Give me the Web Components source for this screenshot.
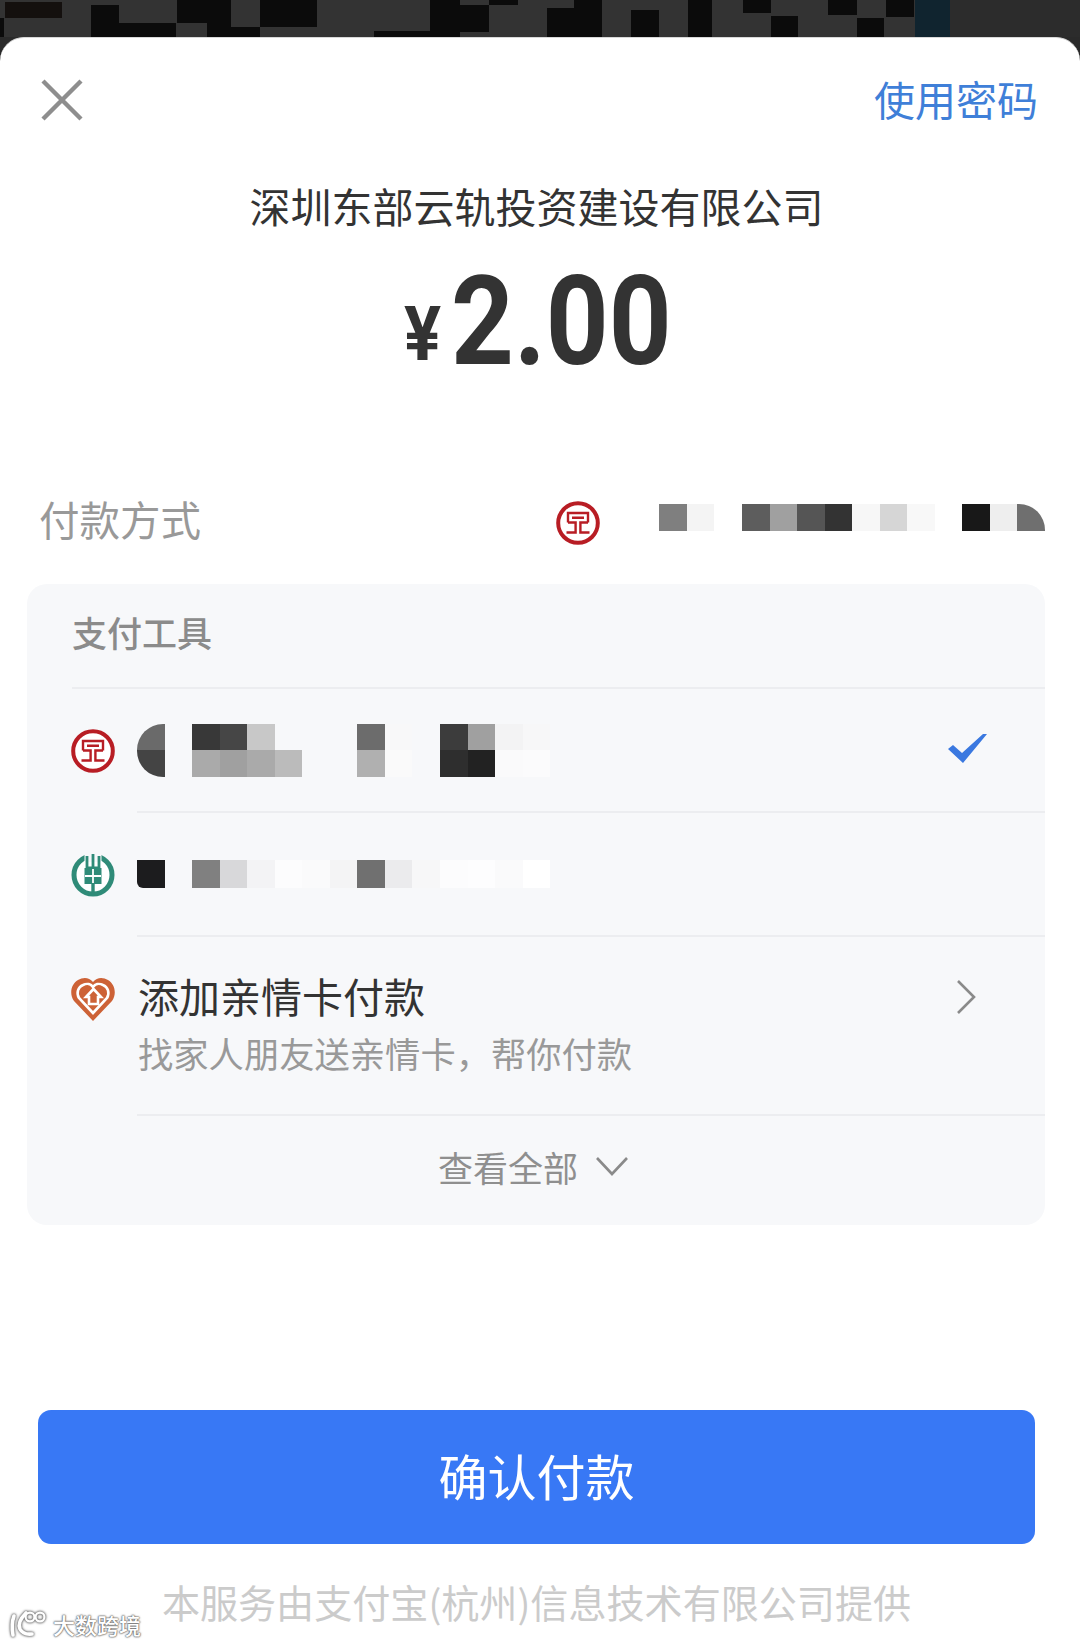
<!DOCTYPE html>
<html lang="zh-CN">
<head>
<meta charset="utf-8">
<title>确认付款</title>
<style>
  html, body { margin: 0; padding: 0; background: #2a2a2a; }
  body { font-family: "Noto Sans CJK SC", "Noto Sans", sans-serif; }
</style>
</head>
<body>
<pay-screen></pay-screen>

<template id="t-backdrop">
  <style>
    :host { display: block; height: 37px; background: #333; overflow: hidden; }
    svg { display: block; width: 1080px; height: 37px; }
  </style>
  <svg viewBox="0 0 1080 37" aria-hidden="true">
    <g fill="#0b0b0b">
      <rect x="5" y="2" width="57" height="16" fill="#14100e"/>
      <rect x="0" y="18" width="4" height="19"/>
      <rect x="91" y="5" width="28" height="32"/>
      <rect x="119" y="23" width="57" height="14"/>
      <rect x="177" y="0" width="54" height="37"/>
      <rect x="177" y="23" width="30" height="14" fill="#333"/>
      <rect x="231" y="27" width="29" height="10"/>
      <rect x="260" y="0" width="57" height="27"/>
      <rect x="374" y="31" width="56" height="6"/>
      <rect x="430" y="0" width="30" height="37"/>
      <rect x="460" y="5" width="29" height="27"/>
      <rect x="489" y="0" width="29" height="5"/>
      <rect x="547" y="8" width="55" height="29"/>
      <rect x="574" y="0" width="28" height="8"/>
      <rect x="631" y="10" width="28" height="27"/>
      <rect x="688" y="0" width="24" height="37"/>
      <rect x="743" y="0" width="28" height="13"/>
      <rect x="771" y="16" width="27" height="21"/>
      <rect x="828" y="0" width="29" height="15"/>
      <rect x="857" y="18" width="27" height="19"/>
      <rect x="886" y="0" width="28" height="17"/>
      <rect x="915" y="0" width="35" height="37" fill="#10242f"/>
      <rect x="950" y="0" width="130" height="37" fill="#2c2c2c"/>
    </g>
  </svg>
</template>

<template id="t-mosaic">
  <style>
    :host { display: inline-block; }
    .g { display: grid; grid-template-columns: repeat(var(--cols), 27.55px); grid-auto-rows: var(--cell-h, 26.5px); }
  </style>
  <div class="g"></div>
</template>

<template id="t-row">
  <style>
    :host { display: flex; align-items: stretch; }
    .icon { flex: none; width: 110px; padding-left: 44px; box-sizing: border-box; display: flex; align-items: center; }
    :host([top]) .icon { align-items: flex-start; padding-top: 40px; }
    .body { flex: 1; min-width: 0; display: flex; align-items: center; justify-content: space-between; height: var(--h, 122px); border-bottom: 2px solid #ecedf0; }
    :host([top]) .body { align-items: flex-start; }
  </style>
  <div class="icon"><slot name="icon"></slot></div>
  <div class="body"><slot></slot><slot name="end"></slot></div>
</template>

<template id="t-button">
  <style>
    :host { display: flex; align-items: center; justify-content: center; box-sizing: border-box; width: 997px; height: 134px; margin-left: 38px; background: #3878f5; border-radius: 13px; color: #fff; font-size: 49px; line-height: 1; padding-bottom: 6px; }
  </style>
  <slot></slot>
</template>

<template id="t-watermark">
  <style>
    :host { position: absolute; left: 8px; bottom: 8px; display: flex; align-items: center; gap: 3px; color: #fff; font-size: 22px; line-height: 28px; font-weight: 500; text-shadow: 0 0 2px #666, 0 0 2px #666, 0 0 1px #666; }
    svg { display: block; filter: drop-shadow(0 0 1px #666) drop-shadow(0 0 1px #888); }
  </style>
  <svg width="42" height="28" viewBox="0 0 42 28" fill="none" stroke="#fff" stroke-width="3.6" stroke-linecap="round">
    <path d="M6 6 Q3 14 5 25"/>
    <path d="M18 3 Q9 12 12 19 Q15 25 24 24"/>
    <circle cx="22" cy="7" r="4.4" stroke-width="2.2"/>
    <circle cx="32" cy="7" r="4.4" stroke-width="2.2"/>
  </svg>
  <span><slot></slot></span>
</template>

<template id="t-icon">
  <style>
    :host { display: block; width: 44px; height: 44px; }
    svg { display: block; width: 44px; height: 44px; }
  </style>
  <div id="i"></div>
</template>

<template id="t-screen">
  <style>
    :host { display: block; position: relative; width: 1080px; height: 1646px; overflow: hidden; color: #333; font-family: "Noto Sans CJK SC", "Noto Sans", sans-serif; }
    .sheet { background: #fff; height: 1609px; border-radius: 24px 24px 0 0; border-top: 1px solid #d8d8d8; box-sizing: border-box; }
    .hd { display: flex; align-items: center; justify-content: space-between; height: 123px; padding: 0 42px 0 41px; }
    .pw { color: #3f7fd8; font-size: 41px; line-height: 1; margin-top: -2px; }
    .title { text-align: center; font-size: 41px; line-height: 60px; margin-top: 14px; padding-right: 7px; color: #333; }
    .amt { display: flex; justify-content: center; align-items: baseline; height: 150px; line-height: 150px; margin-top: 12px; padding-right: 6px; font-family: Roboto, "Liberation Sans", sans-serif; font-weight: 700; color: #333; }
    .amt div { display: flex; align-items: baseline; gap: 14px; transform: scaleX(.885); }
    .amt .c { font-size: 76px; transform-origin: right bottom; transform: translate(3px, -4px) scaleX(1.03); }
    .amt .n { font-size: 124px; }
    .method { display: flex; align-items: center; height: 60px; margin-top: 92px; padding: 0 35px 0 39px; }
    .method .l { color: #999; font-size: 40.5px; line-height: 1; margin-right: auto; }
    .method bank-icon { margin-top: 8px; }
    .method pay-mosaic { margin-left: 59px; margin-top: -4px; --cell-h: 27px; }
    .panel { margin: 35px 35px 0 27px; height: 641px; background: #f7f8fa; border-radius: 20px; }
    .ph { margin-left: 45px; height: 101px; border-bottom: 2px solid #ecedf0; display: flex; align-items: center; color: #8b8b8b; font-size: 35px; font-weight: 500; line-height: 1; padding-bottom: 2px; box-sizing: content-box; }
    .ph span { margin-top: -6px; }
    .tx { margin-left: 1px; }
    .t1 { font-size: 41px; line-height: 58px; margin-top: 29px; color: #333; }
    .t2 { font-size: 35.3px; line-height: 58px; color: #999; }
    .more { display: flex; align-items: center; justify-content: center; box-sizing: border-box; height: 106px; color: #8f8f8f; font-size: 35px; line-height: 1; padding: 0 6px 6px 0; }
    .more svg { margin-left: 18px; }
    .check { margin-right: 58px; margin-top: -4px; }
    .chev { margin: 43px 69px 0 0; }
    pay-button { margin-top: 185px; }
    .foot { text-align: center; color: #cbcbcb; font-size: 38.1px; line-height: 56px; margin-top: 30px; padding-right: 7px; }
  </style>
  <pay-backdrop></pay-backdrop>
  <div class="sheet">
    <div class="hd">
      <svg width="42" height="42" viewBox="0 0 42 42" fill="none" stroke="#8e8e8e" stroke-width="4.4" aria-label="关闭"><path d="M2 2 L40 40 M40 2 L2 40"/></svg>
      <span class="pw">使用密码</span>
    </div>
    <div class="title">深圳东部云轨投资建设有限公司</div>
    <div class="amt"><div><span class="c">¥</span><span class="n">2.00</span></div></div>
    <div class="method">
      <span class="l">付款方式</span>
      <bank-icon type="icbc"></bank-icon>
      <pay-mosaic cols="14" cells="#7f7f7f,#f4f4f4,transparent,#5d5d5d,#a0a0a0,#555555,#333333,#f7f7f7,#d6d6d6,#f8f8f8,transparent,#181818,#eeeeee,#6f6f6f|0 26px 0 0"></pay-mosaic>
    </div>
    <div class="panel">
      <div class="ph"><span>支付工具</span></div>
      <pay-row>
        <bank-icon slot="icon" type="icbc"></bank-icon>
        <pay-mosaic cols="15" cells="#6a6a6a|26px 0 0 0,transparent,#383838,#464646,#c8c8c8,transparent,transparent,transparent,#6c6c6c,#f8f8f9,transparent,#3c3c3c,#a0a0a0,#f3f3f4,#f7f7f8,#444444|0 0 0 26px,transparent,#aaaaaa,#a0a0a0,#aaaaaa,#bbbbbb,transparent,transparent,#b0b0b0,#fafafa,transparent,#2e2e2e,#222222,#fafafb,#fbfbfc"></pay-mosaic>
        <svg class="check" slot="end" width="39" height="29" viewBox="0 0 39 29" aria-hidden="true"><path d="M0 15 L5 11 L14 19 L35 0 L39 0 L15 29 Z" fill="#3a78e0"/></svg>
      </pay-row>
      <pay-row style="--h:122px">
        <bank-icon slot="icon" type="abc"></bank-icon>
        <pay-mosaic style="--cell-h:28px" cols="15" cells="#1c1c1e|0 0 0 6px,transparent,#808080,#d8d8da,#f3f3f5,#fcfcfd,#fafafb,#f4f4f5,#707070,#ebebed,#f7f7f8,#fcfcfd,#fdfdfe,#fafafb,#ffffff"></pay-mosaic>
      </pay-row>
      <pay-row top style="--h:177px">
        <bank-icon slot="icon" type="heart"></bank-icon>
        <div class="tx">
          <div class="t1">添加亲情卡付款</div>
          <div class="t2">找家人朋友送亲情卡，帮你付款</div>
        </div>
        <svg class="chev" slot="end" width="20" height="34" viewBox="0 0 20 34" fill="none" stroke="#8a8a8a" stroke-width="2.6" aria-hidden="true"><path d="M2 1 L18 17 L2 33"/></svg>
      </pay-row>
      <div class="more"><span>查看全部</span><svg width="32" height="20" viewBox="0 0 32 20" fill="none" stroke="#8a8a8a" stroke-width="2.6" aria-hidden="true"><path d="M1 2 L16 18 L31 2"/></svg></div>
    </div>
    <pay-button>确认付款</pay-button>
    <div class="foot">本服务由支付宝(杭州)信息技术有限公司提供</div>
  </div>
  <pay-watermark>大数跨境</pay-watermark>
</template>

<script>
  function tpl(id) { return document.getElementById(id).content.cloneNode(true); }
  function simple(name, id) {
    customElements.define(name, class extends HTMLElement {
      constructor() { super(); this.attachShadow({ mode: 'open' }).appendChild(tpl(id)); }
    });
  }
  const ICONS = {
    icbc: `<svg viewBox="0 0 44 44" fill="none" stroke="#b81d24" aria-hidden="true">
      <circle cx="22" cy="22" r="19.8" stroke-width="4" fill="#fff"/>
      <path stroke-width="2.4" d="M12 21.5 V12 H32 V21.5 M12 21.5 H19.6 V31.5 H10.5 M32 21.5 H24.4 V31.5 H33.5 M16 16.8 H28"/>
    </svg>`,
    abc: `<svg viewBox="0 0 44 44" aria-hidden="true">
      <circle cx="22" cy="22" r="19" fill="#fff" stroke="#2f8b78" stroke-width="5"/>
      <rect x="13.5" y="0" width="17" height="9" fill="#f7f8fa"/>
      <g fill="none" stroke="#2f8b78">
        <path stroke-width="2.8" d="M16 3 V15 H28 V3"/>
        <path stroke-width="2.8" d="M22 1 V15"/>
        <path stroke-width="3.4" d="M22 29 V43"/>
      </g>
      <rect x="13.5" y="15" width="17" height="16" fill="#2f8b78"/>
      <path stroke="#fff" stroke-width="1.8" d="M22 16 V30 M14 23 H30"/>
    </svg>`,
    heart: `<svg viewBox="0 0 44 44" aria-hidden="true">
      <path fill="#cd6236" d="M22 44 L3 24 C-2 17 0 7 7 3 C12 0 18 0 22 5 C26 0 32 0 37 3 C44 7 46 17 41 24 Z"/>
      <path fill="none" stroke="#fff" stroke-width="2.6" d="M22 36 L8 21 C5 16 7 10 12 8 C16 6 20 7 22 10 C24 7 28 6 32 8 C37 10 39 16 36 21 Z"/>
      <path fill="none" stroke="#fff" stroke-width="2.6" d="M15 20 L22.5 12 L30 20 H27 V27 H18 V20 Z"/>
    </svg>`
  };
  customElements.define('bank-icon', class extends HTMLElement {
    constructor() {
      super();
      const r = this.attachShadow({ mode: 'open' });
      r.appendChild(tpl('t-icon'));
    }
    connectedCallback() { this.shadowRoot.getElementById('i').innerHTML = ICONS[this.getAttribute('type')] || ''; }
  });
  customElements.define('pay-mosaic', class extends HTMLElement {
    constructor() { super(); this.attachShadow({ mode: 'open' }).appendChild(tpl('t-mosaic')); }
    connectedCallback() {
      const g = this.shadowRoot.querySelector('.g');
      g.style.setProperty('--cols', this.getAttribute('cols'));
      g.innerHTML = '';
      for (const c of this.getAttribute('cells').split(',')) {
        const [bg, rad] = c.split('|');
        const d = document.createElement('div');
        d.style.background = bg;
        if (rad) d.style.borderRadius = rad;
        g.appendChild(d);
      }
    }
  });
  simple('pay-backdrop', 't-backdrop');
  simple('pay-row', 't-row');
  simple('pay-button', 't-button');
  simple('pay-watermark', 't-watermark');
  simple('pay-screen', 't-screen');
</script>
</body>
</html>
